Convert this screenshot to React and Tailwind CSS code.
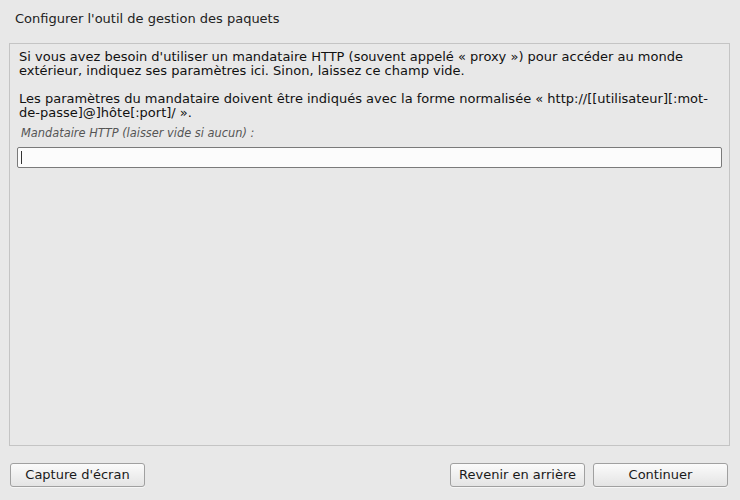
const btn =
    "h-[24px] w-[135px] rounded-[3px] border border-[#a0a0a0] bg-gradient-to-b from-[#fbfbfb] to-[#e4e4e4] text-[13px] text-[#1a1a1a] shadow-[0_1px_0_rgba(255,255,255,0.6)]";

export default function App() {
    return (
        <div
            className="w-[740px] h-[500px] bg-[#e8e8e8] flex flex-col text-[#111]"
            style={{fontFamily: '"DejaVu Sans", sans-serif'}}
        >
            <div className="h-[43px] flex items-center pl-[15px] pb-[6px] text-[13px] text-[#222]">
                Configurer l'outil de gestion des paquets
            </div>

            <div className="mx-[9px] w-[721px] h-[403px] border border-[#c4c4c4] bg-[#e8e8e8] pt-[6px] pl-[9px] pr-[6px] flex flex-col">
                <p className="text-[13px] leading-[14px] whitespace-nowrap">
                    <span className="block">Si vous avez besoin d'utiliser un mandataire HTTP (souvent appelé « proxy ») pour accéder au monde</span>
                    <span className="block">extérieur, indiquez ses paramètres ici. Sinon, laissez ce champ vide.</span>
                </p>
                <p className="text-[13px] leading-[14px] mt-[14px] whitespace-nowrap">
                    <span className="block">Les paramètres du mandataire doivent être indiqués avec la forme normalisée « http://[[utilisateur][:mot-</span>
                    <span className="block">de-passe]@]hôte[:port]/ ».</span>
                </p>
                <div className="mt-[6px] pl-[2px] text-[11.4px] leading-[14px] italic text-[#555]">
                    Mandataire HTTP (laisser vide si aucun) :
                </div>
                <div className="mt-[7px] -ml-[2px] w-[705px] h-[21px] rounded-[2px] border border-[#7a7a7a] bg-[#fcfcfc] flex items-center pl-[3px]">
                    <div className="w-px h-[13px] bg-[#333]" />
                </div>
            </div>

            <div className="flex items-center mt-[17px] px-[10px]">
                <button className={btn}>Capture d'écran</button>
                <div className="flex-1" />
                <button className={btn}>Revenir en arrière</button>
                <button className={`${btn} ml-[8px] mr-[2px]`}>Continuer</button>
            </div>
        </div>
    );
}
